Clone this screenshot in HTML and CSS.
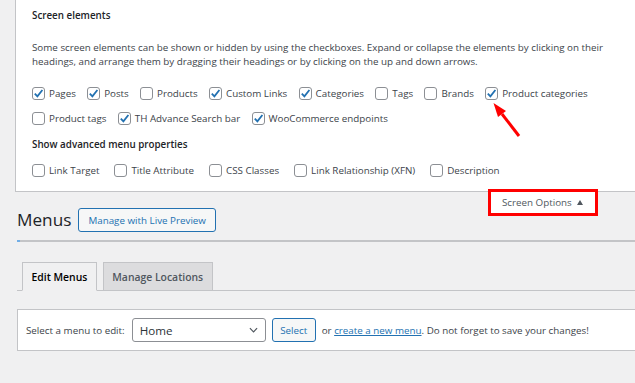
FILE: index.html
```html
<!DOCTYPE html>
<html lang="en">
<head>
<meta charset="utf-8">
<title>Menus</title>
<link rel="stylesheet" href="styles.css">
</head>
<body>
<div class="screen-meta">
  <h5>Screen elements</h5>
  <p>Some screen elements can be shown or hidden by using the checkboxes. Expand or collapse the elements by clicking on their headings, and arrange them by dragging their headings or by clicking on the up and down arrows.</p>
  <div class="prefs">
    <label class="opt"><span class="cb on"><svg viewBox="0 0 13 13"><path d="M2.8 6.6 5.4 9.4 10.4 3"/></svg></span>Pages</label>
    <label class="opt"><span class="cb on"><svg viewBox="0 0 13 13"><path d="M2.8 6.6 5.4 9.4 10.4 3"/></svg></span>Posts</label>
    <label class="opt"><span class="cb"></span>Products</label>
    <label class="opt"><span class="cb on"><svg viewBox="0 0 13 13"><path d="M2.8 6.6 5.4 9.4 10.4 3"/></svg></span>Custom Links</label>
    <label class="opt"><span class="cb on"><svg viewBox="0 0 13 13"><path d="M2.8 6.6 5.4 9.4 10.4 3"/></svg></span>Categories</label>
    <label class="opt"><span class="cb"></span>Tags</label>
    <label class="opt"><span class="cb"></span>Brands</label>
    <label class="opt"><span class="cb on"><svg viewBox="0 0 13 13"><path d="M2.8 6.6 5.4 9.4 10.4 3"/></svg></span>Product categories</label>
    <label class="opt"><span class="cb"></span>Product tags</label>
    <label class="opt"><span class="cb on"><svg viewBox="0 0 13 13"><path d="M2.8 6.6 5.4 9.4 10.4 3"/></svg></span>TH Advance Search bar</label>
    <label class="opt"><span class="cb on"><svg viewBox="0 0 13 13"><path d="M2.8 6.6 5.4 9.4 10.4 3"/></svg></span>WooCommerce endpoints</label>
  </div>
  <h5 class="adv">Show advanced menu properties</h5>
  <div class="prefs prefs-adv">
    <label class="opt"><span class="cb"></span>Link Target</label>
    <label class="opt"><span class="cb"></span>Title Attribute</label>
    <label class="opt"><span class="cb"></span>CSS Classes</label>
    <label class="opt"><span class="cb"></span>Link Relationship (XFN)</label>
    <label class="opt"><span class="cb"></span>Description</label>
  </div>
</div>

<div class="wrap">
  <div class="head-row">
    <div class="title-group">
      <h1>Menus</h1>
      <a class="btn">Manage with Live Preview</a>
    </div>
    <button class="screen-toggle">Screen Options <span class="tri"></span></button>
  </div>
  <div class="header-end"></div>

  <nav class="tabs">
    <a class="tab active">Edit Menus</a>
    <a class="tab">Manage Locations</a>
  </nav>

  <div class="manage-menus">
    <span class="sel-label">Select a menu to edit:</span>
    <div class="select">Home<svg class="chev" viewBox="0 0 10 6"><path d="M1 1 5 5 9 1"/></svg></div>
    <a class="btn btn-small">Select</a>
    <span class="hint">or <a class="link">create a new menu</a>. Do not forget to save your changes!</span>
  </div>
</div>

<svg class="annot-arrow" viewBox="0 0 40 40" width="40" height="40">
  <line x1="14" y1="14" x2="31" y2="36"/>
  <polygon points="5.5,3 18,11 10,17"/>
</svg>
</body>
</html>
```
FILE: styles.css
```css
* { box-sizing: border-box; }

body {
  margin: 0;
  width: 635px;
  height: 383px;
  overflow: hidden;
  position: relative;
  background: #f0f0f1;
  font-family: "Open Sans", "Noto Sans", sans-serif;
  font-size: 9.8px;
  color: #3c434a;
}

/* Screen options panel */
.screen-meta {
  margin-left: 15px;
  background: #fff;
  border-left: 1px solid #c3c4c7;
  border-bottom: 1px solid #c3c4c7;
  padding: 9px 16px 14px;
}
.screen-meta h5 {
  margin: 0;
  font-size: 9.8px;
  font-weight: 600;
  line-height: 14px;
  color: #1d2327;
}
.screen-meta p {
  margin: 18px 0 0;
  line-height: 14px;
}
.prefs {
  display: flex;
  flex-wrap: wrap;
  column-gap: 11.3px;
  row-gap: 12px;
  margin-top: 18px;
}
.screen-meta .adv { margin-top: 13px; }
.prefs-adv {
  margin-top: 12px;
  column-gap: 15px;
}
.opt {
  display: flex;
  align-items: center;
  height: 13px;
  line-height: 13px;
  white-space: nowrap;
}
.cb {
  flex: none;
  width: 13px;
  height: 13px;
  margin-right: 4px;
  border: 1px solid #8c8f94;
  border-radius: 3px;
  background: #fff;
  position: relative;
}
.cb svg {
  position: absolute;
  left: -1px;
  top: -1px;
  width: 13px;
  height: 13px;
  fill: none;
  stroke: #2271b1;
  stroke-width: 1.8;
}

/* Main wrap */
.wrap {
  margin-left: 17px;
}
.head-row {
  display: flex;
  justify-content: space-between;
  align-items: flex-start;
}
.title-group {
  display: flex;
  align-items: center;
  gap: 7px;
  margin-top: 16px;
}
.title-group h1 {
  margin: 0;
  font-size: 17.2px;
  font-weight: 400;
  line-height: 24px;
  color: #1d2327;
}
.btn {
  display: inline-flex;
  align-items: center;
  justify-content: center;
  height: 24px;
  padding: 0 9px;
  border: 1px solid #2271b1;
  border-radius: 3px;
  background: #f6f7f7;
  color: #2271b1;
  font-size: 9.8px;
}
.screen-toggle {
  margin: 0 40px 0 0;
  width: 104px;
  height: 21px;
  padding: 0 0 0 11px;
  display: flex;
  align-items: center;
  border: 0;
  background: #fff;
  outline: 3px solid #f00;
  font-family: inherit;
  font-size: 9.8px;
  color: #50575e;
}
.tri {
  margin-left: 5px;
  width: 0;
  height: 0;
  border-left: 3px solid transparent;
  border-right: 3px solid transparent;
  border-bottom: 5px solid #50575e;
}
.header-end {
  margin-top: 8px;
  height: 2px;
  background: #c3c4c7;
  border-left: 3px solid #72aee6;
}

/* Tabs */
.tabs {
  margin-top: 20px;
  display: flex;
  gap: 6px;
  padding-left: 5px;
  border-bottom: 1px solid #c3c4c7;
}
.tab {
  height: 29px;
  margin-bottom: -1px;
  display: flex;
  align-items: center;
  padding: 0 8.5px;
  border: 1px solid #c3c4c7;
  background: #dcdcde;
  color: #50575e;
  font-size: 10.4px;
  font-weight: 600;
}
.tab.active {
  background: #f0f0f1;
  border-bottom-color: #f0f0f1;
  color: #000;
}

/* Select menu box */
.manage-menus {
  margin-top: 18px;
  display: flex;
  align-items: center;
  padding: 8px;
  background: #fff;
  border: 1px solid #c3c4c7;
  border-right: 0;
}
.sel-label { color: #3c434a; }
.select {
  margin-left: 7px;
  width: 134px;
  height: 24px;
  padding: 0 7px;
  display: flex;
  align-items: center;
  justify-content: space-between;
  border: 1px solid #8c8f94;
  border-radius: 3px;
  font-size: 11.6px;
  color: #2c3338;
}
.chev {
  width: 9px;
  height: 6px;
  fill: none;
  stroke: #50575e;
  stroke-width: 1.3;
}
.btn-small {
  margin-left: 6px;
  width: 44px;
  padding: 0;
}
.hint { margin-left: 6px; color: #3c434a; }
.link {
  color: #2271b1;
  text-decoration: underline;
}

/* Annotation arrow */
.annot-arrow {
  position: absolute;
  left: 488px;
  top: 100px;
}
.annot-arrow line {
  stroke: #f00;
  stroke-width: 3;
}
.annot-arrow polygon { fill: #f00; }
```
